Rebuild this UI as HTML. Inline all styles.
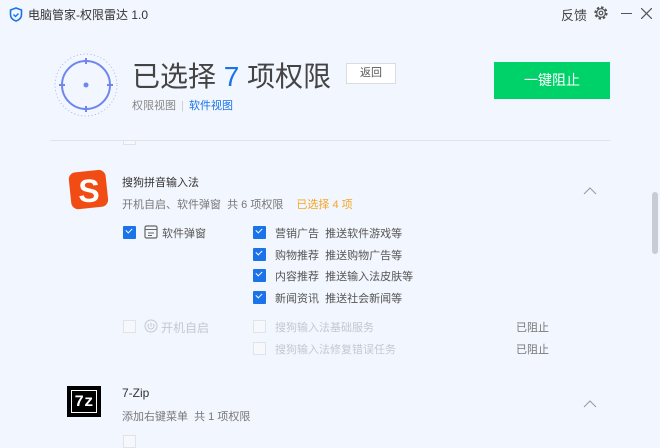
<!DOCTYPE html>
<html><head><meta charset="utf-8"><style>
*{margin:0;padding:0;box-sizing:border-box}
body{width:660px;height:439px;overflow:hidden;background:#f2f6fe;font-family:"Liberation Sans","Noto Sans CJK SC",sans-serif;position:relative;color:#333}
.a{position:absolute;white-space:nowrap}
.cb{position:absolute;width:13px;height:13px;background:#1a73e8;border-radius:1px}
.cb:after{content:"";position:absolute;left:3px;top:2px;width:5px;height:3px;border-left:1.5px solid #fff;border-bottom:1.5px solid #fff;transform:rotate(-45deg)}
.ec{position:absolute;width:13px;height:13px;border:1px solid #dfe3ea;background:#f6f8fc}
.t{font-size:11px;color:#555}
.g{font-size:11px;color:#777}
.d{font-size:11px;color:#c4c8cf}
</style></head><body>
<svg class="a" style="left:9px;top:7px" width="14" height="15" viewBox="0 0 14 15"><path d="M7 1L1.5 3v4.5C1.5 11 4 13 7 14c3-1 5.5-3 5.5-6.5V3z" fill="none" stroke="#1a73e8" stroke-width="1.6"/><path d="M4.5 7.5l2 2 3-3" fill="none" stroke="#1a73e8" stroke-width="1.4"/></svg>
<div class="a" style="left:28px;top:6px;font-size:12px;color:#333">电脑管家-权限雷达 1.0</div>
<div class="a" style="left:561px;top:5px;font-size:13px;color:#444">反馈</div>
<svg class="a" style="left:593px;top:5px" width="16" height="16" viewBox="0 0 16 16"><circle cx="8" cy="8" r="5.5" fill="none" stroke="#555" stroke-width="2.2" stroke-dasharray="2.4 1.9"/><circle cx="8" cy="8" r="4.3" fill="none" stroke="#555" stroke-width="1.1"/><circle cx="8" cy="8" r="1.8" fill="none" stroke="#555" stroke-width="1.2"/></svg>
<div class="a" style="left:621px;top:13px;width:11px;height:1px;background:#555"></div>
<svg class="a" style="left:641px;top:8px" width="11" height="11"><path d="M0 0L11 11M11 0L0 11" stroke="#555" stroke-width="1.2"/></svg>
<svg class="a" style="left:53px;top:52px" width="66" height="66" viewBox="0 0 66 66"><circle cx="33" cy="33" r="31" fill="none" stroke="#a8b6f0" stroke-width="1" stroke-dasharray="1 2.5"/><circle cx="33" cy="33" r="24" fill="none" stroke="#6f86ef" stroke-width="2"/><path d="M33 6v6M33 54v6M6 33h6M54 33h6" stroke="#6f86ef" stroke-width="2"/><circle cx="33" cy="33" r="2.5" fill="#6f86ef"/></svg>
<div class="a" style="left:132px;top:55px;font-size:28px;color:#444">已选择 <span style="color:#1a73e8">7</span> 项权限</div>
<div class="a" style="left:346px;top:63px;width:50px;height:21px;background:#fff;border:1px solid #d8dce3;font-size:11px;color:#555;text-align:center;line-height:19px">返回</div>
<div class="a" style="left:132px;top:97px;font-size:11px;color:#888">权限视图 <span style="color:#ccc;margin:0 2px">|</span> <span style="color:#1a73e8">软件视图</span></div>
<div class="a" style="left:494px;top:62px;width:116px;height:37px;background:#00d26a;color:#fff;font-size:14px;text-align:center;line-height:37px">一键阻止</div>
<div class="a" style="left:50px;top:140px;width:560px;height:1px;background:#e0e4ea"></div>
<div class="ec" style="left:123px;top:141px;height:4px;border-top:none"></div>
<svg class="a" style="left:67px;top:168px" width="44" height="44" viewBox="0 0 44 44"><rect x="3" y="3" width="37" height="37" rx="7" fill="#f04c14" transform="rotate(-6 22 22)"/><text x="22" y="34" font-size="32" font-weight="bold" fill="#fff" text-anchor="middle" font-family="Liberation Sans">S</text></svg>
<div class="a" style="left:122px;top:174px;font-size:11px;color:#333">搜狗拼音输入法</div>
<div class="a g" style="left:122px;top:196px">开机自启、软件弹窗 &nbsp;共 6 项权限 <span style="color:#f5a623;margin-left:10px">已选择 4 项</span></div>
<svg class="a" style="left:583px;top:187px" width="14" height="8"><path d="M1 7L7 1L13 7" fill="none" stroke="#999" stroke-width="1"/></svg>
<div class="a" style="left:652px;top:192px;width:6px;height:62px;background:#c8ccd3;border-radius:3px"></div>
<div class="cb" style="left:123px;top:226px"></div>
<svg class="a" style="left:144px;top:225px" width="14" height="14"><rect x="1" y="1" width="12" height="12" rx="1.5" fill="none" stroke="#666" stroke-width="1.2"/><path d="M1 4.5h12M4 8h6M4 10.5h4" stroke="#666" stroke-width="1"/></svg>
<div class="a t" style="left:162px;top:225px">软件弹窗</div>
<div class="cb" style="left:253px;top:226px"></div><div class="a t" style="left:275px;top:225px">营销广告 &nbsp;推送软件游戏等</div>
<div class="cb" style="left:253px;top:248px"></div><div class="a t" style="left:275px;top:247px">购物推荐 &nbsp;推送购物广告等</div>
<div class="cb" style="left:253px;top:269px"></div><div class="a t" style="left:275px;top:268px">内容推荐 &nbsp;推送输入法皮肤等</div>
<div class="cb" style="left:253px;top:291px"></div><div class="a t" style="left:275px;top:290px">新闻资讯 &nbsp;推送社会新闻等</div>
<div class="ec" style="left:123px;top:320px"></div>
<svg class="a" style="left:144px;top:319px" width="14" height="14"><circle cx="7" cy="7" r="6" fill="none" stroke="#c4c8cf"/><path d="M7 3.5v4M4.8 5a3 3 0 1 0 4.4 0" fill="none" stroke="#c4c8cf"/></svg>
<div class="a d" style="left:161px;top:319px;font-size:12px">开机自启</div>
<div class="ec" style="left:253px;top:320px"></div><div class="a d" style="left:275px;top:319px">搜狗输入法基础服务</div>
<div class="a g" style="left:516px;top:319px">已阻止</div>
<div class="ec" style="left:253px;top:342px"></div><div class="a d" style="left:275px;top:341px">搜狗输入法修复错误任务</div>
<div class="a g" style="left:516px;top:341px">已阻止</div>
<div class="a" style="left:67px;top:386px;width:34px;height:31px;background:#000;border:2px solid #000"><div style="position:absolute;left:2px;top:2px;right:2px;bottom:2px;border:1.5px solid #fff;color:#fff;font:bold 16px 'Liberation Mono',monospace;text-align:center;line-height:22px">7z</div></div>
<div class="a" style="left:122px;top:386px;font-size:12px;color:#333">7-Zip</div>
<div class="a g" style="left:122px;top:408px">添加右键菜单 &nbsp;共 1 项权限</div>
<svg class="a" style="left:583px;top:400px" width="14" height="8"><path d="M1 7L7 1L13 7" fill="none" stroke="#999" stroke-width="1"/></svg>
<div class="ec" style="left:123px;top:435px"></div>
</body></html>
